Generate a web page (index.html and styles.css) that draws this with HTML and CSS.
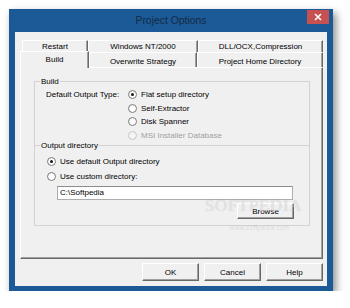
FILE: index.html
```html
<!DOCTYPE html>
<html lang="en">
<head>
    <meta charset="UTF-8">
    <title>Project Options</title>
    <link rel="stylesheet" href="styles.css">
</head>
<body>
    <div class="window">
        <div class="titlebar">
            <span></span>
            <span class="title">Project Options</span>
            <button class="close" type="button">
                <svg width="8" height="8" viewBox="0 0 8 8"><path d="M1 1L7 7M7 1L1 7" stroke="#fff" stroke-width="1.6"/></svg>
            </button>
        </div>
        <div class="client">
            <div class="tab-row back">
                <div class="tab t-restart">Restart</div>
                <div class="tab t-nt">Windows NT/2000</div>
                <div class="tab t-dll">DLL/OCX,Compression</div>
            </div>
            <div class="tab-row front">
                <div class="tab active">Build</div>
                <div class="tab t-overwrite">Overwrite Strategy</div>
                <div class="tab t-home">Project Home Directory</div>
            </div>

            <div class="panel">
                <div class="group group-build">
                    <div class="group-title">Build</div>
                    <div class="output-type">
                        <div class="field-label">Default Output Type:</div>
                        <div class="radio-list">
                            <div class="radio checked"><span class="dot"></span>Flat setup directory</div>
                            <div class="radio"><span class="dot"></span>Self-Extractor</div>
                            <div class="radio"><span class="dot"></span>Disk Spanner</div>
                            <div class="radio disabled"><span class="dot"></span>MSI Installer Database</div>
                        </div>
                    </div>
                </div>

                <div class="group group-output">
                    <div class="group-title">Output directory</div>
                    <div class="dir-options">
                        <div class="radio row checked"><span class="dot"></span>Use default Output directory</div>
                        <div class="radio row"><span class="dot"></span>Use custom directory:</div>
                    </div>
                    <div class="textbox">C:\Softpedia</div>
                    <button class="btn btn-browse" type="button">Browse</button>
                </div>
            </div>

            <div class="actions">
                <button class="btn" type="button">OK</button>
                <button class="btn" type="button">Cancel</button>
                <button class="btn" type="button">Help</button>
            </div>

            <div class="watermark">
                <div class="wm-logo">SOFTPEDIA</div>
                <div class="wm-url">www.softpedia.com</div>
            </div>
        </div>
    </div>
</body>
</html>
```

FILE: styles.css
```css
/* base */
* {
    margin: 0;
    padding: 0;
    box-sizing: border-box;
}

body {
    background: #fff;
    font-family: "Liberation Sans", Arial, sans-serif;
    font-size: 8px;
    color: #000;
}

/* window frame */
.window {
    margin: 9px 0 0 9px;
    width: 324px;
    background: #1b5a96;
    padding: 0 6px 5px 6px;
    box-shadow: 3px 4px 8px rgba(0, 0, 0, 0.45);
}

.titlebar {
    height: 23px;
    display: grid;
    grid-template-columns: 1fr auto 1fr;
    align-items: start;
}

.title {
    line-height: 23px;
    font-size: 10.4px;
    color: #142a45;
}

.close {
    justify-self: end;
    width: 22px;
    height: 14px;
    margin: 1px -2px 0 0;
    background: #c75050;
    border: none;
    display: flex;
    align-items: center;
    justify-content: center;
}

.client {
    position: relative;
    background: #f0f0f0;
    height: 254px;
    padding: 8px 4px 0 5px;
}

/* tabs */
.tab-row {
    display: flex;
}

.tab-row.back {
    height: 12px;
    padding-left: 2px;
}

.tab-row.front {
    height: 15px;
}

.tab {
    text-align: center;
    border-top: 1px solid #fff;
    border-left: 1px solid #fff;
    border-right: 1px solid #696969;
    box-shadow: inset -1px 0 0 #a0a0a0;
    white-space: nowrap;
}

.back .tab {
    height: 12px;
    line-height: 11px;
}

.t-restart { width: 66px; }
.t-nt { width: 110px; }
.t-dll { width: 125px; }

.front .tab {
    height: 15px;
    line-height: 15px;
    padding-top: 1px;
}

.tab.active {
    position: relative;
    z-index: 1;
    width: 69px;
    height: 17px;
    margin-top: -1px;
    line-height: 13px;
    padding-top: 1px;
    background: #f0f0f0;
}

.t-overwrite { width: 108px; }
.t-home { width: 126px; }

.panel {
    width: 303px;
    height: 192px;
    border-top: 1px solid #fff;
    border-left: 1px solid #fff;
    border-right: 1px solid #696969;
    border-bottom: 1px solid #696969;
    box-shadow: inset -1px -1px 0 #a0a0a0;
    padding: 13px 0 0 13px;
}

/* group boxes */
.group {
    width: 276px;
    border: 1px solid #d2d2d2;
}

.group-build {
    height: 65px;
}

.group-output {
    height: 81px;
    margin-top: -1px;
}

.group-title {
    width: max-content;
    height: 11px;
    line-height: 11px;
    margin: -6px 0 0 5px;
    padding: 0 1px;
    background: #f0f0f0;
}

.output-type {
    display: flex;
    margin: 1px 0 0 11px;
}

.field-label {
    width: 82px;
    line-height: 13.5px;
}

.radio {
    display: flex;
    align-items: center;
    height: 13.5px;
    white-space: nowrap;
}

.dot {
    width: 9px;
    height: 9px;
    margin-right: 4px;
    border-radius: 50%;
    border: 1px solid #7e7e7e;
    background: radial-gradient(circle at 60% 60%, #fff 40%, #e2e2e2);
    display: flex;
    align-items: center;
    justify-content: center;
}

.radio.checked .dot::after {
    content: "";
    width: 3px;
    height: 3px;
    border-radius: 50%;
    background: #1a1a1a;
}

.radio.disabled {
    color: #a0a0a0;
}

.radio.disabled .dot {
    border-color: #c6c6c6;
    background: #f4f4f4;
}

.dir-options {
    margin: 3px 0 0 12px;
}

.radio.row {
    height: 15px;
}

.textbox {
    width: 236px;
    height: 14px;
    margin: 2px 0 0 22px;
    padding-left: 2px;
    line-height: 12px;
    background: #fff;
    border: 1px solid #adadad;
    border-top-color: #8c8c8c;
}

/* buttons */
.btn {
    width: 57px;
    height: 18px;
    font-family: inherit;
    font-size: 8px;
    color: #000;
    background: #f0f0f0;
    border: 1px solid;
    border-color: #fff #696969 #696969 #fff;
    box-shadow: inset -1px -1px 0 #a0a0a0;
}

.btn-browse {
    display: block;
    height: 16px;
    margin: 3px 0 0 202px;
}

.actions {
    display: flex;
    justify-content: flex-end;
    gap: 5px;
    margin-top: 4px;
}

/* watermark over the dialog */
.watermark {
    position: absolute;
    left: 190px;
    top: 164px;
    text-align: center;
    pointer-events: none;
}

.wm-logo {
    font-family: "Liberation Serif", serif;
    font-size: 17px;
    letter-spacing: 0.6px;
    color: rgba(255, 255, 255, 0.55);
    text-shadow: 0 0 1px rgba(0, 0, 0, 0.22);
}

.wm-url {
    margin: 8px 0 0 12px;
    font-size: 7px;
    color: rgba(0, 0, 0, 0.13);
}
```
